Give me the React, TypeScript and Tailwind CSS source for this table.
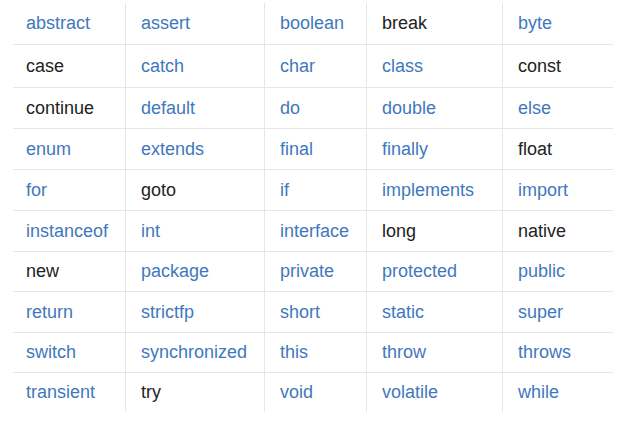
const rows: [string, boolean][][] = [
  [["abstract", true], ["assert", true], ["boolean", true], ["break", false], ["byte", true]],
  [["case", false], ["catch", true], ["char", true], ["class", true], ["const", false]],
  [["continue", false], ["default", true], ["do", true], ["double", true], ["else", true]],
  [["enum", true], ["extends", true], ["final", true], ["finally", true], ["float", false]],
  [["for", true], ["goto", false], ["if", true], ["implements", true], ["import", true]],
  [["instanceof", true], ["int", true], ["interface", true], ["long", false], ["native", false]],
  [["new", false], ["package", true], ["private", true], ["protected", true], ["public", true]],
  [["return", true], ["strictfp", true], ["short", true], ["static", true], ["super", true]],
  [["switch", true], ["synchronized", true], ["this", true], ["throw", true], ["throws", true]],
  [["transient", true], ["try", false], ["void", true], ["volatile", true], ["while", true]],
];

const heights = ["h-[42px]", "h-[43px]", "h-[41px]", "h-[41px]", "h-[41px]", "h-[41px]", "h-[40px]", "h-[41px]", "h-[40px]", "h-[39px]"];

export default function App() {
  return (
    <div className="w-[637px] h-[431px] bg-white font-['Liberation_Sans',Arial,sans-serif] text-[18px]">
      <div className="ml-[13px] pt-[3px] w-[600px] flex flex-col">
        {rows.map((row, i) => (
          <div
            key={i}
            className={`grid grid-cols-[112px_139px_102px_136px_111px] ${heights[i]} ${
              i < rows.length - 1 ? "border-b border-[#e6e6e6]" : ""
            }`}
          >
            {row.map(([word, blue], j) => (
              <div
                key={word}
                className={`flex items-center ${
                  j === 0 ? "pl-[13px]" : "pl-[15px] border-l border-[#e6e6e6]"
                } ${blue ? "text-[#3f78bd]" : "text-[#222]"}`}
              >
                {word}
              </div>
            ))}
          </div>
        ))}
      </div>
    </div>
  );
}
